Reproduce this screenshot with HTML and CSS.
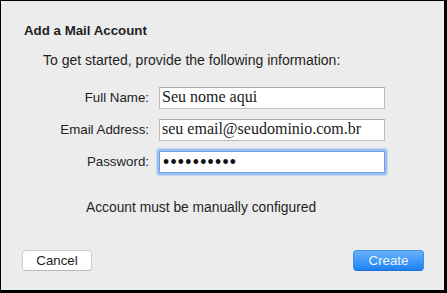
FILE: index.html
```html
<!DOCTYPE html>
<html>
<head>
<meta charset="utf-8">
<link rel="stylesheet" href="styles.css">
</head>
<body>
<div class="window">
  <div class="title">Add a Mail Account</div>
  <div class="intro">To get started, provide the following information:</div>
  <div class="form">
    <div class="label">Full Name:</div>
    <div class="field">Seu nome aqui</div>
    <div class="label">Email Address:</div>
    <div class="field">seu email@seudominio.com.br</div>
    <div class="label">Password:</div>
    <div class="field focused"><span class="dots">••••••••••</span></div>
  </div>
  <div class="status">Account must be manually configured</div>
  <div class="buttons">
    <div class="btn cancel">Cancel</div>
    <div class="btn create">Create</div>
  </div>
</div>
</body>
</html>
```
FILE: styles.css
```css
html, body {
  margin: 0;
  padding: 0;
}
body {
  width: 447px;
  height: 293px;
  overflow: hidden;
  font-family: "Liberation Sans", Arial, sans-serif;
  color: #1f1f1f;
}
.window {
  box-sizing: border-box;
  width: 447px;
  height: 293px;
  background: #ececec;
  border-style: solid;
  border-color: #000;
  border-width: 1px 3px 3px 1px;
  padding: 22px 20px 0 23px;
  font-size: 13.3px;
  line-height: 16px;
}
.title {
  font-weight: bold;
  font-size: 13.3px;
}
.intro {
  margin-top: 13px;
  padding-left: 19px;
  font-size: 14px;
}
.form {
  margin-top: 19px;
  display: grid;
  grid-template-columns: 125px 226px;
  column-gap: 10px;
  row-gap: 10px;
}
.label {
  text-align: right;
  line-height: 22px;
  height: 22px;
  color: #222;
}
.field {
  box-sizing: border-box;
  height: 22px;
  background: #fff;
  border: 1px solid #bdbdbd;
  border-top-color: #a9a9a9;
  padding: 0 2px;
  font-family: "Liberation Serif", "Times New Roman", serif;
  font-size: 16px;
  line-height: 18px;
  color: #1a1a1a;
  white-space: nowrap;
  overflow: hidden;
}
.field.focused {
  border-color: #6f9fe0;
  box-shadow: 0 0 0 2.5px #9cc0f0;
  border-radius: 1px;
  padding-left: 3px;
}
.dots {
  font-family: "Liberation Sans", Arial, sans-serif;
  font-size: 17.5px;
  line-height: 20px;
  letter-spacing: 1.3px;
  color: #111;
}
.status {
  margin-top: 27px;
  padding-left: 62px;
  font-size: 13.8px;
}
.buttons {
  margin-top: 34px;
  display: flex;
  justify-content: space-between;
  margin-left: -2px;
}
.btn {
  box-sizing: border-box;
  height: 21px;
  line-height: 19px;
  text-align: center;
  border-radius: 4px;
  font-size: 13.3px;
}
.cancel {
  width: 70px;
  background: #fff;
  border: 1px solid #cfcfcf;
  border-bottom-color: #b9b9b9;
  color: #222;
}
.create {
  width: 71px;
  background: linear-gradient(#67b1fa, #1f82f2);
  border: 1px solid #3d8eef;
  border-bottom-color: #1c6fd8;
  color: #eef5ff;
}
```
